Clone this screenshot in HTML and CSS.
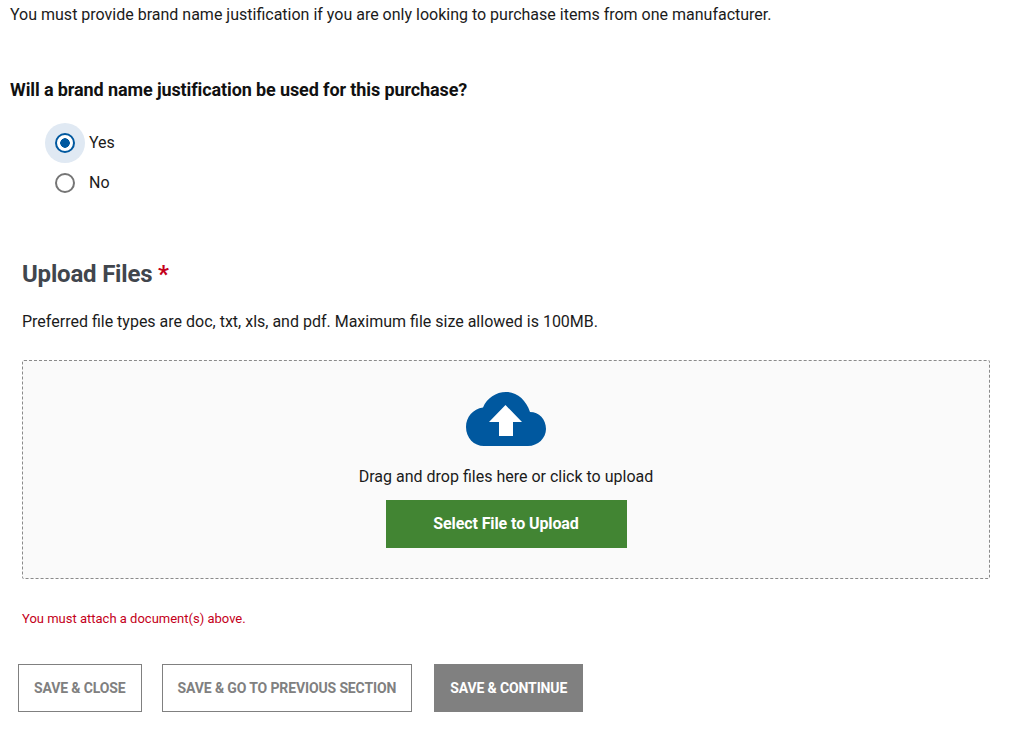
FILE: index.html
```html
<!DOCTYPE html>
<html lang="en">
<head>
    <meta charset="UTF-8">
    <title>Upload Files</title>
    <link rel="stylesheet" href="styles.css">
</head>
<body>

<p class="intro">You must provide brand name justification if you are only looking to purchase items from one manufacturer.</p>

<h3 class="question">Will a brand name justification be used for this purchase?</h3>

<div class="radio-group">
    <label class="radio-row">
        <span class="radio-halo"><span class="radio checked"></span></span>
        <span class="radio-text">Yes</span>
    </label>
    <label class="radio-row">
        <span class="radio-halo off"><span class="radio"></span></span>
        <span class="radio-text">No</span>
    </label>
</div>

<div class="upload">
    <h2 class="upload-title">Upload Files <span class="required">*</span></h2>
    <p class="upload-hint">Preferred file types are doc, txt, xls, and pdf. Maximum file size allowed is 100MB.</p>

    <div class="dropzone">
        <svg class="cloud" width="80" height="54" viewBox="0 0 80 54">
            <path fill="#00589f" d="M18 54C8 54 0 46 0 35C0 25 7 17 17 15.500C21 6 30 0 40 0C51 0 60 8 64 20C73 20 80 27 80 37C80 46 72 54 62 54Z"/>
            <path fill="#fff" d="M39.500 13L56 30H47V44H33V30H23Z"/>
        </svg>
        <p class="drop-text">Drag and drop files here or click to upload</p>
        <button type="button" class="btn-select">Select File to Upload</button>
    </div>

    <p class="error">You must attach a document(s) above.</p>
</div>

<div class="actions">
    <button type="button" class="btn-outline">SAVE &amp; CLOSE</button>
    <button type="button" class="btn-outline">SAVE &amp; GO TO PREVIOUS SECTION</button>
    <button type="button" class="btn-solid">SAVE &amp; CONTINUE</button>
</div>

</body>
</html>
```

FILE: styles.css
```css
body {
    margin: 0;
    padding: 0 10px;
    font-family: Roboto, "Liberation Sans", sans-serif;
    font-size: 16px;
    color: #1b1b1b;
    background-color: #fff;
}

p {
    margin: 0;
}

.intro {
    padding-top: 5px;
    line-height: 19px;
}

.question {
    margin: 55px 0 0 0;
    font-size: 18px;
    font-weight: 700;
    letter-spacing: -0.11px;
    line-height: 21px;
    color: #111;
}

.radio-group {
    margin: 23px 0 0 35px;
}

.radio-row {
    display: flex;
    align-items: center;
    gap: 4px;
    height: 40px;
}

.radio-text {
    padding-bottom: 2px;
}

.radio-halo {
    display: flex;
    align-items: center;
    justify-content: center;
    width: 40px;
    height: 40px;
    border-radius: 50%;
    background-color: #e0e9f3;
}

.radio-halo.off {
    background-color: transparent;
}

.radio {
    box-sizing: border-box;
    width: 20px;
    height: 20px;
    border: 2px solid #757575;
    border-radius: 50%;
    background-color: #fff;
}

.radio.checked {
    border-color: #00589f;
    background: #fff radial-gradient(circle, #00589f 0, #00589f 4.5px, transparent 5px);
}

.upload {
    padding: 0 13px 0 12px;
}

.upload-title {
    margin: 54px 0 0 0;
    font-size: 24px;
    font-weight: 700;
    letter-spacing: -0.2px;
    line-height: 34px;
    color: #41464d;
}

.required {
    color: #c4001a;
}

.upload-hint {
    margin-top: 21px;
    line-height: 19px;
}

.dropzone {
    display: flex;
    flex-direction: column;
    align-items: center;
    box-sizing: border-box;
    height: 219px;
    margin-top: 29px;
    padding-top: 31px;
    border: 1px dashed #8a8a8a;
    border-radius: 2px;
    background-color: #fafafa;
}

.drop-text {
    margin-top: 21px;
    line-height: 19px;
}

.btn-select {
    width: 241px;
    height: 48px;
    margin-top: 14px;
    padding-bottom: 3px;
    border: none;
    background-color: #428533;
    color: #fff;
    font-family: inherit;
    font-size: 16px;
    font-weight: 700;
    letter-spacing: -0.1px;
    cursor: pointer;
}

.error {
    margin-top: 32px;
    font-size: 13px;
    line-height: 15px;
    color: #c4001a;
}

.actions {
    display: flex;
    margin: 38px 0 0 8px;
}

.actions button {
    height: 48px;
    padding: 0 15px;
    font-family: inherit;
    font-size: 14px;
    font-weight: 700;
    letter-spacing: -0.13px;
    cursor: pointer;
}

.btn-outline {
    margin-right: 20px;
    border: 1px solid #808080;
    background-color: #fff;
    color: #808080;
}

.actions .btn-solid {
    margin-left: 2px;
    padding: 0 16px;
    border: none;
    background-color: #808080;
    color: #fff;
}
```
